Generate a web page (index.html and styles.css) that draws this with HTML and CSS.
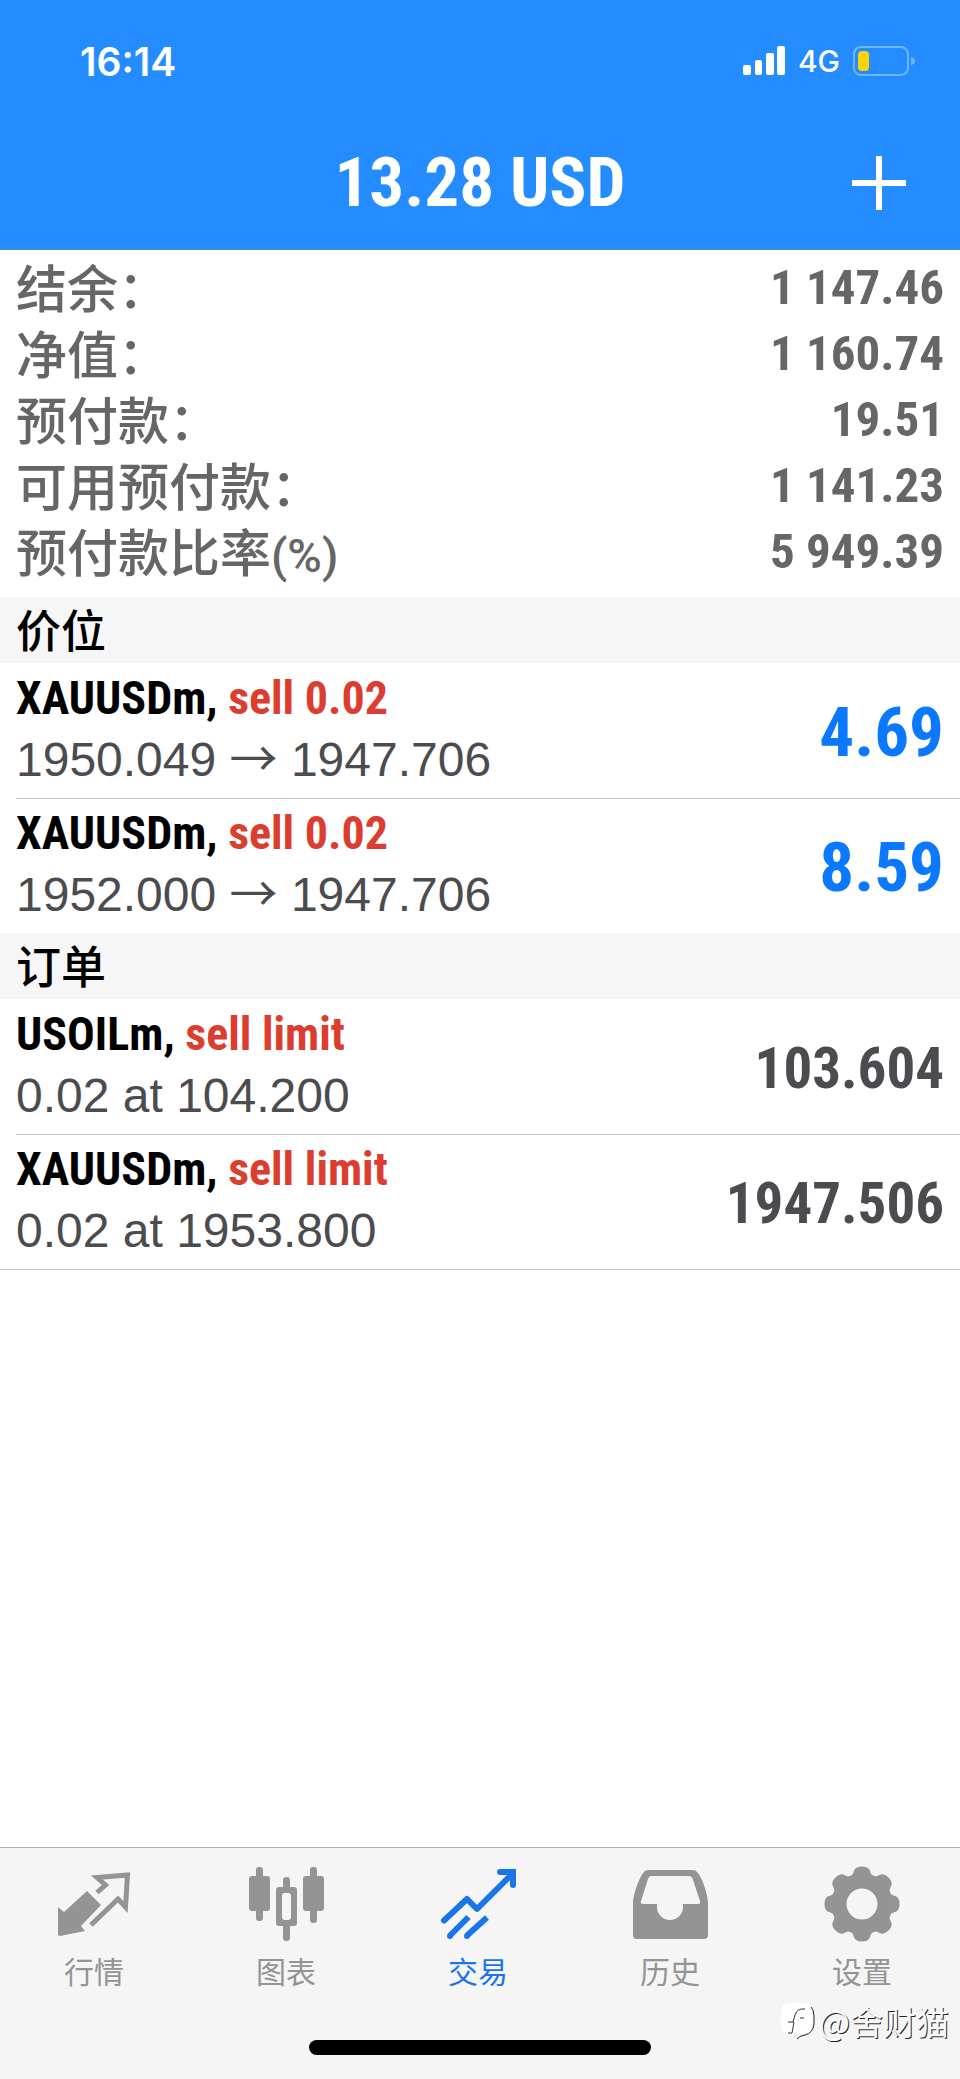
FILE: index.html
```html
<!DOCTYPE html>
<html lang="zh-CN">
<head>
<meta charset="utf-8">
<meta name="viewport" content="width=device-width, initial-scale=1">
<title>交易</title>
<link rel="stylesheet" href="styles.css">
</head>
<body>
<div class="app">
  <header class="header">
    <div class="status">
      <time class="status-time">16:14</time>
      <div class="status-right">
        <svg class="signal" width="42" height="30" viewBox="0 0 42 30" fill="#fff" aria-hidden="true">
          <rect x="0" y="19" width="8" height="10" rx="2"/><rect x="12" y="14" width="7" height="15" rx="2"/><rect x="23" y="7" width="8" height="22" rx="2"/><rect x="34" y="0" width="8" height="29" rx="2"/>
        </svg>
        <span class="network">4G</span>
        <svg width="62" height="30" viewBox="0 0 62 30" aria-hidden="true">
          <rect x="1" y="1" width="54" height="28" rx="7" fill="none" stroke="#6cb8ff" stroke-width="2"/>
          <rect x="5" y="5" width="11" height="20" rx="4" fill="#ffd20a"/>
          <path d="M58 11Q62 12 62 15T58 19Z" fill="#6cb8ff"/>
        </svg>
      </div>
    </div>
    <div class="titlebar">
      <h1 class="title">13.28 USD</h1>
      <button class="add" type="button" aria-label="新订单">
        <svg width="54" height="54" viewBox="0 0 54 54" aria-hidden="true"><path d="M27 0V54M0 27H54" stroke="#fff" stroke-width="6"/></svg>
      </button>
    </div>
  </header>

  <main class="main">
    <dl class="summary">
      <div class="summary-row"><dt>结余：</dt><dd>1 147.46</dd></div>
      <div class="summary-row"><dt>净值：</dt><dd>1 160.74</dd></div>
      <div class="summary-row"><dt>预付款：</dt><dd>19.51</dd></div>
      <div class="summary-row"><dt>可用预付款：</dt><dd>1 141.23</dd></div>
      <div class="summary-row"><dt>预付款比率<span class="unit">(%)</span></dt><dd>5 949.39</dd></div>
    </dl>

    <section>
      <h2 class="section-title">价位</h2>
      <ul class="list">
        <li class="item">
          <div class="item-text"><p class="symbol">XAUUSDm, <span class="side">sell 0.02</span></p><p class="detail">1950.049 <span class="arrow">→</span> 1947.706</p></div>
          <strong class="profit">4.69</strong>
        </li>
        <li class="item">
          <div class="item-text"><p class="symbol">XAUUSDm, <span class="side">sell 0.02</span></p><p class="detail">1952.000 <span class="arrow">→</span> 1947.706</p></div>
          <strong class="profit">8.59</strong>
        </li>
      </ul>
    </section>

    <section class="orders">
      <h2 class="section-title">订单</h2>
      <ul class="list">
        <li class="item">
          <div class="item-text"><p class="symbol">USOILm, <span class="side">sell limit</span></p><p class="detail">0.02 at 104.200</p></div>
          <strong class="price">103.604</strong>
        </li>
        <li class="item">
          <div class="item-text"><p class="symbol">XAUUSDm, <span class="side">sell limit</span></p><p class="detail">0.02 at 1953.800</p></div>
          <strong class="price">1947.506</strong>
        </li>
      </ul>
    </section>
  </main>

  <footer class="footer">
    <nav class="tabs">
      <a class="tab" href="#quotes">
        <svg class="tab-icon" viewBox="0 0 76 80" aria-hidden="true">
          <path d="M2 43L8 48L31 27L45 41L25 62L29 67L4 72L2 71Z" fill="currentColor"/>
          <path d="M41 28.500L49.500 21L41 13.500L71.500 11L69.500 43L62 35L35 61" fill="none" stroke="currentColor" stroke-width="5"/>
        </svg>
        <span>行情</span>
      </a>
      <a class="tab" href="#charts">
        <svg class="tab-icon" viewBox="0 0 76 80" fill="currentColor" aria-hidden="true">
          <rect x="8" y="3" width="7" height="54" rx="3"/><rect x="1" y="12" width="21" height="35" rx="3"/>
          <rect x="62" y="3" width="7" height="56" rx="3"/><rect x="55" y="12" width="21" height="35" rx="3"/>
          <path d="M35 23V16Q35 13 38.500 13T42 16V23H46Q49 23 49 26V59Q49 62 46 62H42V74Q42 77 38.500 77T35 74V62H31Q28 62 28 59V26Q28 23 31 23ZM37 29Q34 29 34 32V53Q34 56 37 56H40Q43 56 43 53V32Q43 29 40 29Z" fill-rule="evenodd"/>
        </svg>
        <span>图表</span>
      </a>
      <a class="tab tab-active" href="#trade" aria-current="page">
        <svg class="tab-icon" viewBox="0 0 76 80" fill="none" stroke="currentColor" stroke-width="6" aria-hidden="true">
          <path d="M4 56.500L27 35L37 45L72 10" stroke-linecap="round" stroke-linejoin="round"/>
          <path d="M60 8H73V21" stroke-linecap="round"/>
          <path d="M28.500 53L10 71.500M47 53.500L27 71.500"/>
          <g fill="currentColor" stroke="none"><circle cx="10" cy="72" r="3"/><circle cx="27" cy="72" r="3"/></g>
        </svg>
        <span>交易</span>
      </a>
      <a class="tab" href="#history">
        <svg class="tab-icon" viewBox="0 0 76 80" aria-hidden="true">
          <path d="M1 40C1 29 8 13 11 9Q13 6 16 6H61Q64 6 66 9C70 14 76 30 76 40V71Q76 75 72 75H5Q1 75 1 71ZM19 12Q17 12 16 15L9 37Q8 40 11 40H25V43A13 13 0 0 0 51 43V40H66Q69 40 68 37L61 16Q60 12 57 12Z" fill="currentColor" fill-rule="evenodd"/>
        </svg>
        <span>历史</span>
      </a>
      <a class="tab" href="#settings">
        <svg class="tab-icon" viewBox="0 0 76 80" aria-hidden="true">
          <g transform="translate(38 40)" fill="currentColor">
            <circle r="23" fill="none" stroke="currentColor" stroke-width="15"/>
            <g id="teeth">
              <path id="tooth" d="M-13 -27C-8 -29 -9 -32 -7 -35Q-5 -37.500 0 -37.500T7 -35C9 -32 8 -29 13 -27Z"/>
              <use href="#tooth" transform="rotate(90)"/><use href="#tooth" transform="rotate(180)"/><use href="#tooth" transform="rotate(270)"/>
            </g>
            <use href="#teeth" transform="rotate(45)"/>
          </g>
        </svg>
        <span>设置</span>
      </a>
    </nav>
    <div class="home-indicator"></div>
    <div class="watermark">
      <svg width="34" height="38" viewBox="0 0 34 38" fill="none" aria-hidden="true">
        <rect x="0" y="1" width="31" height="31" rx="8" fill="#fff"/>
        <path d="M30 5Q33 8 33 14V22Q32 31 24 33Q18 34 16 37" stroke="#222" stroke-width="1"/>
        <path d="M7 20H12L14 13Q16 6 24 7M13 20L11 31H7M19 16H23" stroke="#333" stroke-width="1"/>
      </svg>
      <span>@舍财猫</span>
    </div>
  </footer>
</div>
</body>
</html>
```

FILE: styles.css
```css
* { box-sizing: border-box; margin: 0; padding: 0; }

:root {
  --narrow: "Roboto Condensed", "Arial Narrow", "Liberation Sans", sans-serif;
  --cjk: "Noto Sans CJK SC", sans-serif;
  --gutter: 16px;
}

body { background: #fff; font-family: "Liberation Sans", var(--cjk); }

.app { display: flex; flex-direction: column; min-height: 100vh; }

.header { background: #248cff; border-bottom: 2px solid #3c8ade; color: #fff; }

.status {
  display: flex;
  align-items: center;
  justify-content: space-between;
  height: 122px;
  padding: 0 45px 0 80px;
  font-family: Inter, sans-serif;
}
.status-time { font-size: 39px; font-weight: 600; }
.status-right { display: flex; align-items: center; gap: 13px; }
.network { font-size: 30px; font-weight: 500; }

.titlebar {
  display: grid;
  grid-template-columns: 1fr auto 1fr;
  align-items: center;
  height: 122px;
  margin-bottom: 4px;
  padding: 0 54px;
}
.title { grid-column: 2; font: bold 69px/120px var(--narrow); }
.add { justify-self: end; height: 54px; border: 0; background: none; cursor: pointer; }
.add svg { display: block; }

.main { flex: 1; }

.summary { padding: 5px var(--gutter) 12px; color: #666; }
.summary-row { display: flex; justify-content: space-between; height: 66px; line-height: 66px; }
.summary dt { font-family: var(--cjk); font-size: 51px; font-weight: 500; line-height: 62px; }
.summary dd { font-family: var(--narrow); font-size: 49px; font-weight: bold; }
.unit { font-family: Roboto, sans-serif; font-size: 47px; }

.section-title {
  padding: 0 var(--gutter) 2px;
  background: #f6f6f6;
  font: 500 45px/64px var(--cjk);
}

.list { list-style: none; }
.item {
  display: flex;
  align-items: center;
  justify-content: space-between;
  height: 135px;
  margin-left: var(--gutter);
  padding-right: var(--gutter);
}
.item + .item { border-top: 1px solid #c8c8cc; }
.orders { border-bottom: 1px solid #c8c8cc; }

.item-text { padding-bottom: 4px; }
.symbol { font: bold 46px/62px var(--narrow); color: #000; }
.side { color: #db3d30; }
.detail { font-size: 48px; line-height: 62px; color: #4b4b50; }
.arrow { font-family: var(--cjk); line-height: 48px; }
.profit,
.price { padding-top: 4px; font: bold 69px/90px var(--narrow); color: #0a78ff; }
.price { font-size: 57px; color: #4b4b50; }

.footer {
  position: relative;
  height: 232px;
  background: #f5f5f5;
  border-top: 1px solid #b0b0b0;
}
.tabs { display: grid; grid-template-columns: repeat(5, 1fr); padding-top: 16px; }
.tab {
  display: flex;
  flex-direction: column;
  align-items: center;
  gap: 4px;
  padding-right: 4px;
  color: #949494;
  font: 400 30px/44px var(--cjk);
  text-decoration: none;
}
.tab-active { color: #1a75e8; }
.tab-icon { width: 76px; height: 80px; }

.home-indicator { width: 342px; height: 15px; margin: 48px auto 0; border-radius: 8px; background: #000; }

.watermark {
  position: absolute;
  right: 11px;
  bottom: 36px;
  display: flex;
  align-items: center;
  gap: 4px;
  color: #f8f8f8;
  font: 400 33px/44px var(--cjk);
  text-shadow: 1px 1px 0 #222;
}
```
